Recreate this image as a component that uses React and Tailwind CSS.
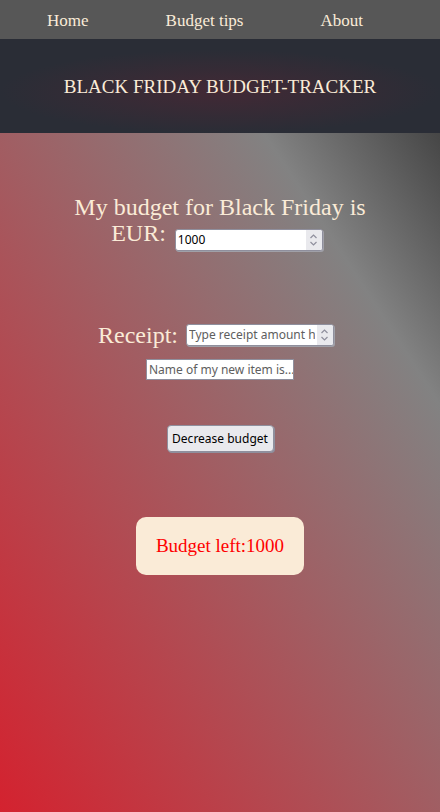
import { useState } from 'react';

const Spinner = () => (
  <div className="absolute right-[1px] top-[1px] bottom-[1px] w-[16px] rounded-r-[2px] bg-[#e9e9ed] flex items-center justify-center">
    <svg width="9" height="14" viewBox="0 0 9 14" fill="none" stroke="#8f8f9d" strokeWidth="1.2">
      <path d="M1.5 5 L4.5 2 L7.5 5" />
      <path d="M1.5 9 L4.5 12 L7.5 9" />
    </svg>
  </div>
);

const App = () => {
  const [budget, setBudget] = useState('1000');
  const [receipt, setReceipt] = useState('');
  const [item, setItem] = useState('');
  const [left, setLeft] = useState(1000);

  const decrease = () => {
    const n = parseFloat(receipt);
    if (!isNaN(n)) setLeft(l => l - n);
    setReceipt('');
  };

  return (
    <div className="min-h-screen flex flex-col font-['Liberation_Serif',serif] text-[#faebd7]">
      <nav className="h-[39px] bg-[#575757] flex items-center pl-[47px] gap-[77px] text-[17px] pt-[2px]">
        <span>Home</span>
        <span>Budget tips</span>
        <span>About</span>
      </nav>

      <header className="h-[94px] bg-[#2a2d36] bg-[radial-gradient(ellipse_220px_42px_at_50%_56%,#422935,#2a2d36)] flex items-center justify-center pt-[2px]">
        <h1 className="text-[19px] uppercase">
          Black Friday Budget-Tracker
        </h1>
      </header>

      <main className="flex-1 bg-[linear-gradient(to_top_right,#d4222f,#828282_80%,#464646)] flex flex-col items-center pt-[61px] pb-[40px]">
        <div className="text-[24px] leading-[26px] text-center w-[300px]">
          My budget for Black Friday is EUR:{' '}
          <span className="relative inline-flex ml-[3px] mr-[6px] align-[-3px]">
            <input
              type="text"
              value={budget}
              onChange={e => setBudget(e.target.value)}
              className="w-[148px] h-[22px] rounded-[3px] border border-[#8f8f9d] shadow-[1px_1px_0_#a0a0a8] bg-white pl-[2px] text-[12px] text-black font-['Noto_Sans',sans-serif] outline-none"
            />
            <Spinner />
          </span>
        </div>

        <div className="mt-[70px] text-[24px] leading-[28px] flex items-center gap-[8px] pr-[8px]">
          <span>Receipt:</span>
          <span className="relative inline-flex">
            <input
              type="text"
              value={receipt}
              onChange={e => setReceipt(e.target.value)}
              placeholder="Type receipt amount here"
              className="w-[148px] h-[22px] rounded-[3px] border border-[#8f8f9d] shadow-[1px_1px_0_#a0a0a8] bg-white pl-[2px] pr-[18px] text-[12px] text-black placeholder:text-[#5e5e5e] font-['Noto_Sans',sans-serif] outline-none"
            />
            <Spinner />
          </span>
        </div>

        <input
          type="text"
          value={item}
          onChange={e => setItem(e.target.value)}
          placeholder="Name of my new item is..."
          className="mt-[10px] w-[148px] h-[21px] border border-[#8f8f9d] bg-white pl-[2px] text-[12px] text-black placeholder:text-[#5e5e5e] font-['Noto_Sans',sans-serif] outline-none"
        />

        <button
          onClick={decrease}
          className="mt-[45px] h-[27px] w-[107px] rounded-[4px] bg-[#e9e9ed] border border-[#8f8f9d] shadow-[1px_1px_0_#8f8f9d] text-[12px] text-black font-['Noto_Sans',sans-serif]"
        >
          Decrease budget
        </button>

        <div className="mt-[65px] w-[168px] h-[58px] rounded-[10px] bg-[#faebd7] flex items-center justify-center text-[19px] text-[#ff0000]">
          Budget left:{left}
        </div>
      </main>
    </div>
  );
};

export default App;
